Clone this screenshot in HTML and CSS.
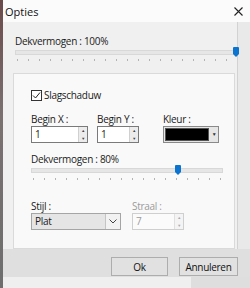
FILE: index.html
```html
<!DOCTYPE html>
<html>
	<head>
		<meta charset="utf-8" />
		<title>Opties</title>
		<link rel="stylesheet" href="styles.css">
	</head>
	<body>
		<div class="screen">
			<div class="edge"></div>
			<div class="window">
				<div class="titlebar">
					<span class="title">Opties</span>
					<svg class="close" width="9" height="9" viewBox="0 0 9 9"><path d="M0.5 0.5L8.5 8.5M8.5 0.5L0.5 8.5" stroke="#222" stroke-width="1.1" fill="none"/></svg>
				</div>
				<div class="body">
					<div class="main">
						<div class="label">Dekvermogen : 100%</div>
						<div class="slider slider-top">
							<div class="track"></div>
							<svg class="thumb" style="left: 218px" width="6" height="10" viewBox="0 0 6 10"><path d="M0 1Q0 0 1 0H5Q6 0 6 1V7L3 10L0 7Z" fill="#0a74d0"/></svg>
							<div class="ticks"></div>
						</div>
						<div class="panel">
							<label class="check">
								<span class="box">
									<svg width="9" height="9" viewBox="0 0 9 9"><path d="M1 4.5L3.5 7L8 1.5" stroke="#222" stroke-width="1" fill="none"/></svg>
								</span>
								Slagschaduw
							</label>
							<div class="fields">
								<div class="field field-x">
									<div class="label">Begin X :</div>
									<div class="input">
										<span class="value">1</span>
										<span class="spin"><i>&#9650;</i><i>&#9660;</i></span>
									</div>
								</div>
								<div class="field field-y">
									<div class="label">Begin Y :</div>
									<div class="input">
										<span class="value">1</span>
										<span class="spin"><i>&#9650;</i><i>&#9660;</i></span>
									</div>
								</div>
								<div class="field field-color">
									<div class="label">Kleur :</div>
									<div class="colorpick">
										<span class="swatch"></span>
										<span class="drop">&#9660;</span>
									</div>
								</div>
							</div>
							<div class="label">Dekvermogen : 80%</div>
							<div class="slider slider-inner">
								<div class="track"></div>
								<svg class="thumb" style="left: 144px" width="6" height="10" viewBox="0 0 6 10"><path d="M0 1Q0 0 1 0H5Q6 0 6 1V7L3 10L0 7Z" fill="#0a74d0"/></svg>
								<div class="ticks"></div>
							</div>
							<div class="fields fields-bottom">
								<div class="field field-style">
									<div class="label">Stijl :</div>
									<div class="select">
										<span class="value">Plat</span>
										<span class="chevron">
											<svg width="8" height="5" viewBox="0 0 8 5"><path d="M0.5 0.5L4 4L7.5 0.5" stroke="#444" stroke-width="1" fill="none"/></svg>
										</span>
									</div>
								</div>
								<div class="field field-radius disabled">
									<div class="label">Straal :</div>
									<div class="input">
										<span class="value">7</span>
										<span class="spin"><i>&#9650;</i><i>&#9660;</i></span>
									</div>
								</div>
							</div>
						</div>
					</div>
					<div class="side"></div>
				</div>
				<div class="footer">
					<button class="btn btn-ok">Ok</button>
					<button class="btn btn-cancel">Annuleren</button>
				</div>
				<div class="bottom-strip"></div>
			</div>
		</div>
	</body>
</html>
```

FILE: styles.css
```css
html,
body {
	margin: 0;
	padding: 0;
	background: #e4e4e4;
}

.screen {
	width: 250px;
	height: 288px;
	display: flex;
	overflow: hidden;
	font-family: "Open Sans", "Noto Sans", sans-serif;
	font-size: 10px;
	letter-spacing: -0.3px;
	color: #1a1a1a;
}

.edge {
	width: 3px;
	background: linear-gradient(#6b4a4a, #7a7070 40%, #6e6e6e);
}

.window {
	flex: 1;
	display: flex;
	flex-direction: column;
	background: #f0f0f0;
}

.titlebar {
	height: 22px;
	display: flex;
	align-items: center;
	background: #fbfbfb;
	padding-left: 2px;
	box-sizing: border-box;
}

.title {
	font-size: 11px;
	letter-spacing: 0;
	color: #111;
}

.close {
	margin-left: auto;
	margin-right: 7px;
}

.body {
	display: flex;
	height: 227px;
}

.main {
	width: 234px;
	padding: 12px 0 0 12px;
	box-sizing: border-box;
	background: #f0f0f0;
}

.side {
	flex: 1;
	background: #e9e9e9;
	border-left: 1px solid #d2d2d2;
}

.label {
	line-height: 14px;
	height: 14px;
	white-space: nowrap;
}

.slider {
	position: relative;
	height: 24px;
}

.slider .track {
	position: absolute;
	left: 0;
	right: 0;
	top: 2px;
	height: 3px;
	background: #e6e6e6;
	border: 1px solid #d8d8d8;
}

.slider .thumb {
	position: absolute;
	top: -1px;
}

.slider .ticks {
	position: absolute;
	left: 2px;
	right: 2px;
	top: 11px;
	height: 2px;
	background: repeating-linear-gradient(90deg, #b3b3b3 0 1px, transparent 1px 11px);
}

.panel {
	margin: 1px 0 0 -2px;
	width: 222px;
	height: 176px;
	box-sizing: border-box;
	background: #f9f9f9;
	border: 1px solid #dadada;
	padding: 16px 0 0 17px;
}

.check {
	display: flex;
	align-items: center;
	gap: 2px;
	height: 11px;
	line-height: 11px;
}

.check .box {
	width: 9px;
	height: 9px;
	border: 1px solid #333;
	background: #fff;
	display: flex;
}

.fields {
	display: flex;
	margin-top: 11px;
	height: 31px;
}

.field-x {
	width: 66px;
}

.field-y {
	width: 66px;
}

.input {
	display: flex;
	height: 17px;
	box-sizing: border-box;
	border: 1px solid #7a7a7a;
	background: #fff;
}

.field-x .input {
	width: 57px;
}

.field-y .input {
	width: 42px;
}

.input .value {
	flex: 1;
	padding-left: 3px;
	line-height: 15px;
}

.spin {
	width: 8px;
	display: flex;
	flex-direction: column;
	border-left: 1px solid #d0d0d0;
	background: #ececec;
}

.spin i {
	flex: 1;
	font-style: normal;
	font-size: 4px;
	line-height: 7px;
	text-align: center;
	color: #444;
}

.colorpick {
	display: flex;
	width: 56px;
	height: 17px;
	box-sizing: border-box;
	border: 1px solid #8a8a8a;
	background: #e6e6e6;
}

.colorpick .swatch {
	width: 44px;
	margin: 1px;
	background: #000;
	border: 1px solid #555;
	box-sizing: border-box;
}

.colorpick .drop {
	flex: 1;
	font-size: 5px;
	line-height: 15px;
	text-align: center;
	color: #333;
}

.panel > .label {
	margin-top: 9px;
}

.slider-inner {
	width: 192px;
}

.slider-inner .ticks {
	top: 12px;
}

.fields-bottom {
	margin-top: 9px;
}

.field-style {
	width: 101px;
}

.select {
	display: flex;
	width: 90px;
	height: 17px;
	box-sizing: border-box;
	border: 1px solid #a5a5a5;
	background: #e5e5e5;
}

.select .value {
	flex: 1;
	padding-left: 3px;
	line-height: 15px;
	border-right: 1px solid #c4c4c4;
}

.select .chevron {
	width: 14px;
	display: flex;
	align-items: center;
	justify-content: center;
	background: #f2f2f2;
}

.field-radius .input {
	width: 52px;
	border-color: #cfcfcf;
	background: #fbfbfb;
}

.disabled {
	color: #9b9b9b;
}

.disabled .spin {
	background: #f4f4f4;
	border-left-color: #e0e0e0;
}

.disabled .spin i {
	color: #aaa;
}

.footer {
	height: 28px;
	display: flex;
	align-items: flex-start;
	padding: 8px 0 0 108px;
	box-sizing: border-box;
	gap: 11px;
	background: #dfdfdf;
}

.btn {
	height: 19px;
	padding: 0;
	font-family: inherit;
	font-size: 10px;
	letter-spacing: -0.3px;
	color: #111;
	background: #e1e1e1;
	border: 1px solid #adadad;
}

.btn-ok {
	width: 57px;
}

.btn-cancel {
	width: 59px;
}

.bottom-strip {
	flex: 1;
	background: linear-gradient(90deg, #efefef 0 188px, #dedede 188px);
}
```
